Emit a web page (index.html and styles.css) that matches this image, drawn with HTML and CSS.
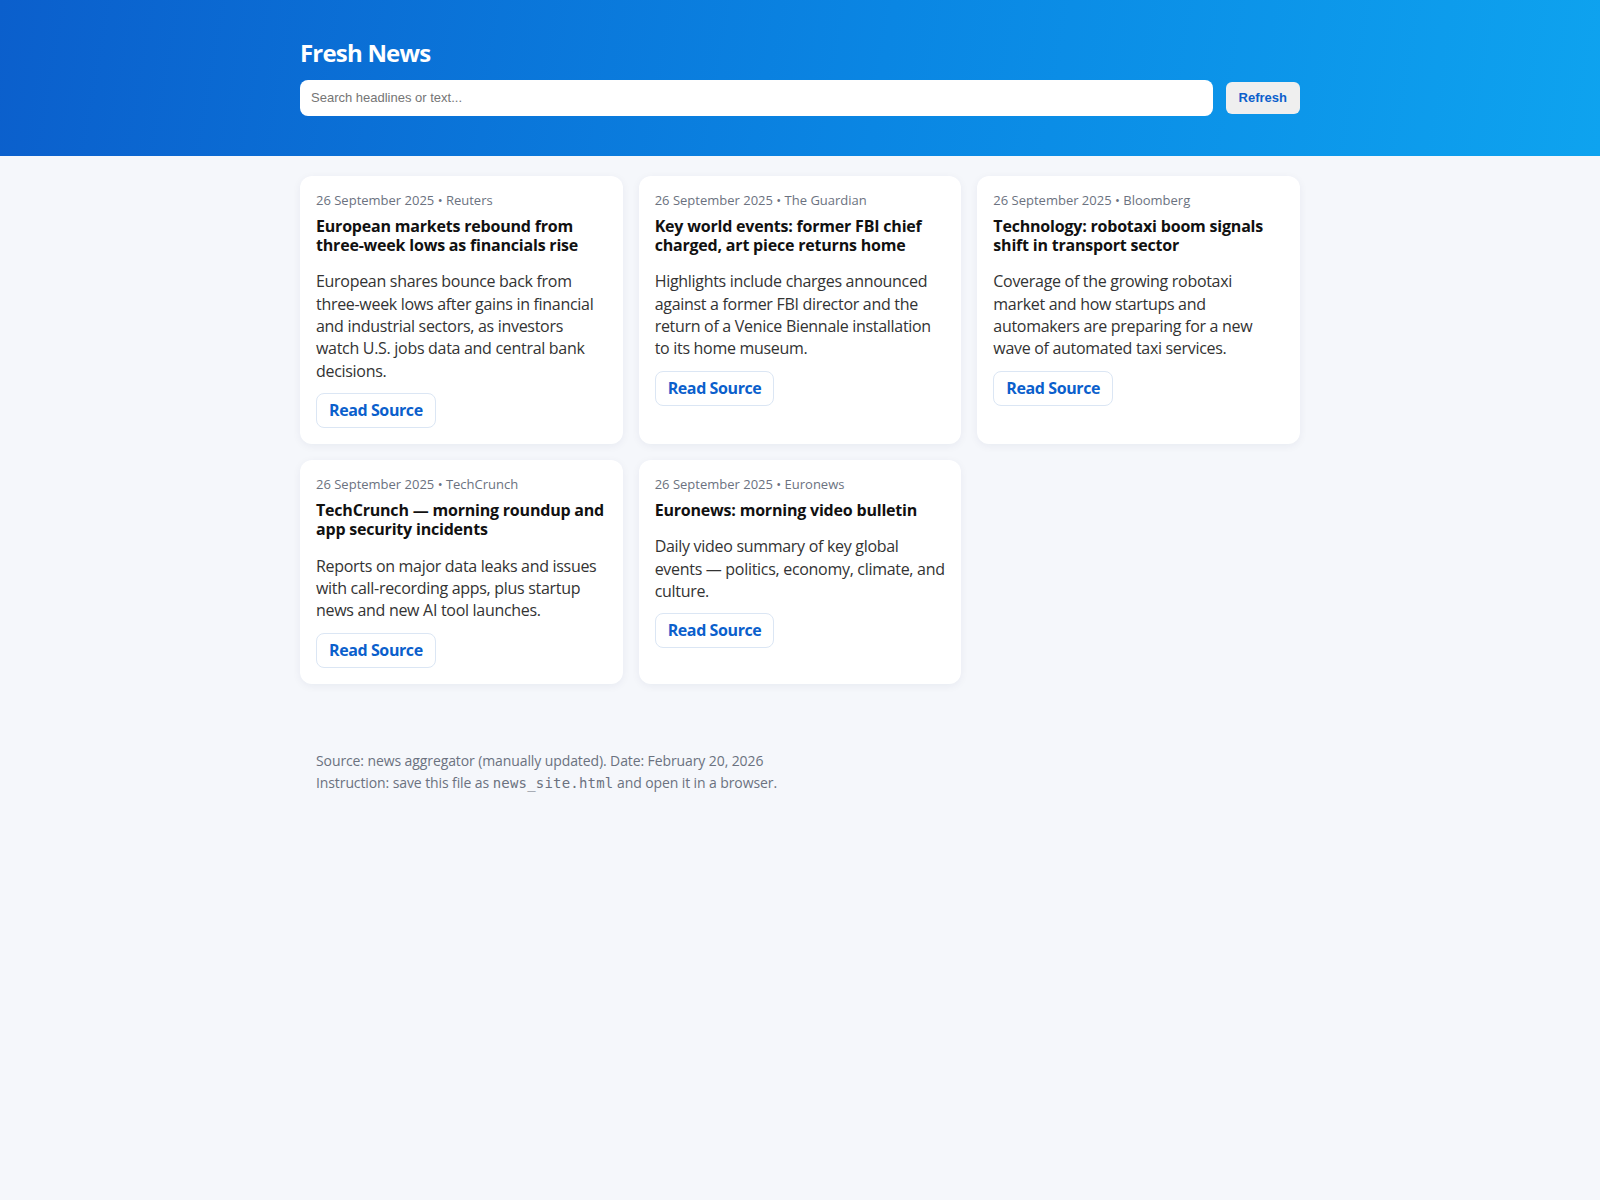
FILE: index.html
```html
<!DOCTYPE html>
<html lang="en">
<head>
<meta charset="utf-8">
<title>Fresh News</title>
<link rel="stylesheet" href="styles.css">
</head>
<body>
<header class="hero">
  <div class="wrap">
    <h1 class="brand">Fresh News</h1>
    <div class="search-row">
      <input class="search" type="text" placeholder="Search headlines or text...">
      <button class="refresh" type="button">Refresh</button>
    </div>
  </div>
</header>
<main class="wrap main">
  <section class="grid">
    <article class="card">
      <div class="meta">26 September 2025 • Reuters</div>
      <h2 class="title">European markets rebound from three-week lows as financials rise</h2>
      <p class="desc">European shares bounce back from three-week lows after gains in financial and industrial sectors, as investors watch U.S. jobs data and central bank decisions.</p>
      <a class="read" href="#">Read Source</a>
    </article>
    <article class="card">
      <div class="meta">26 September 2025 • The Guardian</div>
      <h2 class="title">Key world events: former FBI chief charged, art piece returns home</h2>
      <p class="desc">Highlights include charges announced against a former FBI director and the return of a Venice Biennale installation to its home museum.</p>
      <a class="read" href="#">Read Source</a>
    </article>
    <article class="card">
      <div class="meta">26 September 2025 • Bloomberg</div>
      <h2 class="title">Technology: robotaxi boom signals shift in transport sector</h2>
      <p class="desc">Coverage of the growing robotaxi market and how startups and automakers are preparing for a new wave of automated taxi services.</p>
      <a class="read" href="#">Read Source</a>
    </article>
    <article class="card">
      <div class="meta">26 September 2025 • TechCrunch</div>
      <h2 class="title">TechCrunch — morning roundup and app security incidents</h2>
      <p class="desc">Reports on major data leaks and issues with call-recording apps, plus startup news and new AI tool launches.</p>
      <a class="read" href="#">Read Source</a>
    </article>
    <article class="card">
      <div class="meta">26 September 2025 • Euronews</div>
      <h2 class="title">Euronews: morning video bulletin</h2>
      <p class="desc">Daily video summary of key global events — politics, economy, climate, and culture.</p>
      <a class="read" href="#">Read Source</a>
    </article>
  </section>
  <footer class="foot">
    <div>Source: news aggregator (manually updated). Date: February 20, 2026</div>
    <div>Instruction: save this file as <code>news_site.html</code> and open it in a browser.</div>
  </footer>
</main>
</body>
</html>
```
FILE: styles.css
```css
* { box-sizing: border-box; }
body {
  margin: 0;
  background: #f5f7fb;
  font-family: "Open Sans", "Noto Sans", sans-serif;
  color: #222;
}
.wrap { max-width: 1000px; margin: 0 auto; }
.hero {
  background: linear-gradient(100deg, #0b5fcc 0%, #0a86e3 55%, #0ea3ef 100%);
  padding: 39px 0 40px;
}
.brand {
  margin: 0 0 12px;
  font-size: 24px;
  line-height: 1.2;
  font-weight: 700;
  letter-spacing: -0.8px;
  color: #fff;
}
.search-row { display: flex; align-items: center; gap: 13px; }
.search {
  flex: 1;
  height: 36px;
  border: none;
  border-radius: 8px;
  padding: 0 11px;
  font-family: "Liberation Sans", Arial, sans-serif;
  font-size: 13px;
  outline: none;
}
.search::placeholder { color: #757575; }
.refresh {
  height: 32px;
  padding: 0 13px;
  border: none;
  border-radius: 6px;
  background: #efefef;
  color: #0b5fcc;
  font-family: "Liberation Sans", Arial, sans-serif;
  font-size: 13px;
  font-weight: 700;
}
.main { padding-top: 20px; }
.grid { display: grid; grid-template-columns: repeat(3, 1fr); gap: 16px; }
.card {
  background: #fff;
  border-radius: 12px;
  padding: 16px;
  box-shadow: 0 2px 8px rgba(20, 40, 80, 0.06);
  display: flex;
  flex-direction: column;
  align-items: flex-start;
}
.meta { font-size: 13px; line-height: 16px; color: #6b7280; margin-bottom: 9px; }
.title {
  margin: 0;
  font-size: 16px;
  line-height: 1.2;
  font-weight: 700;
  letter-spacing: -0.2px;
  color: #111;
}
.desc {
  margin: 15px 0 11px;
  font-size: 16px;
  line-height: 1.4;
  letter-spacing: -0.3px;
  color: #333;
}
.read {
  display: inline-block;
  padding: 7px 12px;
  line-height: 19px;
  border: 1px solid #dbe6f4;
  border-radius: 8px;
  color: #0b5fcc;
  font-weight: 700;
  font-size: 16px;
  letter-spacing: -0.4px;
  text-decoration: none;
}
.foot {
  margin-top: 66px;
  padding: 0 16px;
  font-size: 14px;
  line-height: 1.6;
  letter-spacing: -0.1px;
  color: #6b7280;
}
.foot code { font-family: "DejaVu Sans Mono", monospace; font-size: 14px; letter-spacing: 0.2px; }
```
